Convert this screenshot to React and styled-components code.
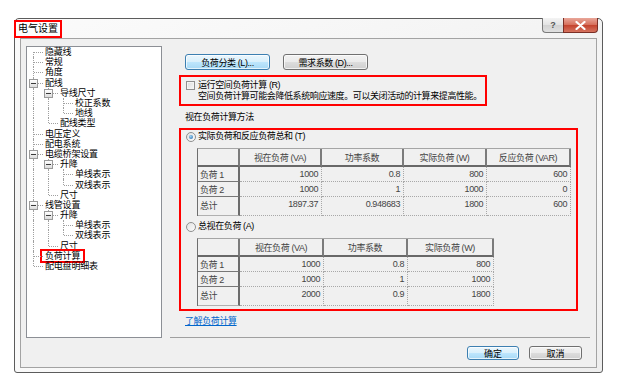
import React from 'react';
import styled, { createGlobalStyle, css } from 'styled-components';

const GlobalStyle = createGlobalStyle`
  * { box-sizing: border-box; }
  body {
    margin: 0;
    background: #ffffff;
    font-family: "Liberation Sans", "Noto Sans CJK SC", sans-serif;
    color: #000;
  }
`;

const treeItems = [
    { label: '隐藏线', guides: [], first: true },
    { label: '常规', guides: [] },
    { label: '角度', guides: [] },
    { label: '配线', guides: [], box: true },
    { label: '导线尺寸', guides: [true], box: true },
    { label: '校正系数', guides: [true, true] },
    { label: '地线', guides: [true, true], last: true },
    { label: '配线类型', guides: [true], last: true },
    { label: '电压定义', guides: [] },
    { label: '配电系统', guides: [] },
    { label: '电缆桥架设置', guides: [], box: true },
    { label: '升降', guides: [true], box: true },
    { label: '单线表示', guides: [true, true] },
    { label: '双线表示', guides: [true, true], last: true },
    { label: '尺寸', guides: [true], last: true },
    { label: '线管设置', guides: [], box: true },
    { label: '升降', guides: [true], box: true },
    { label: '单线表示', guides: [true, true] },
    { label: '双线表示', guides: [true, true], last: true },
    { label: '尺寸', guides: [true], last: true },
    { label: '负荷计算', guides: [], marked: true },
    { label: '配电盘明细表', guides: [], last: true },
];

const totalTable = {
    widths: [42, 82, 82, 83, 84],
    head: ['视在负荷 (VA)', '功率系数', '实际负荷 (W)', '反应负荷 (VAR)'],
    rows: [
        ['负荷 1', '1000', '0.8', '800', '600'],
        ['负荷 2', '1000', '1', '1000', '0'],
        ['总计', '1897.37', '0.948683', '1800', '600'],
    ],
};

const apparentTable = {
    widths: [42, 84, 84, 86],
    head: ['视在负荷 (VA)', '功率系数', '实际负荷 (W)'],
    rows: [
        ['负荷 1', '1000', '0.8', '800'],
        ['负荷 2', '1000', '1', '1000'],
        ['总计', '2000', '0.9', '1800'],
    ],
};

const LoadTable = ({ data }) => {
    const width = data.widths.reduce((a, b) => a + b, 0);
    return (
        <Grid $width={width}>
            <colgroup>
                {data.widths.map((w, i) => (
                    <Col key={i} $w={w} />
                ))}
            </colgroup>
            <thead>
                <tr>
                    <HeadCell />
                    {data.head.map((h) => (
                        <HeadCell key={h}>{h}</HeadCell>
                    ))}
                </tr>
            </thead>
            <tbody>
                {data.rows.map((row, r) => {
                    const tall = r === data.rows.length - 1;
                    return (
                        <tr key={r}>
                            <LabelCell $tall={tall}>{row[0]}</LabelCell>
                            {row.slice(1).map((v, i) => (
                                <ValueCell key={i} $tall={tall}>{v}</ValueCell>
                            ))}
                        </tr>
                    );
                })}
            </tbody>
        </Grid>
    );
};

const TreeRow = ({ item }) => {
    let own = 'full';
    if (item.first) own = 'bottom';
    if (item.last) own = 'top';
    return (
        <Row>
            {item.guides.map((g, i) => (
                <Guide key={i} $v={g ? 'full' : 'none'} />
            ))}
            <Guide $v={own} $stub>
                {item.box && <Expander />}
            </Guide>
            <NodeLabel $marked={item.marked}>{item.label}</NodeLabel>
        </Row>
    );
};

const App = () => {
    return (
        <>
            <GlobalStyle />
            <Window>
                <TitleBar>
                    <Title>电气设置</Title>
                    <Caption>
                        <HelpButton>?</HelpButton>
                        <CloseButton>
                            <svg width="11" height="9" viewBox="0 0 11 9">
                                <path d="M1.5 1 L9.5 8 M9.5 1 L1.5 8" stroke="#fff" strokeWidth="2.2" strokeLinecap="round" />
                            </svg>
                        </CloseButton>
                    </Caption>
                </TitleBar>
                <Client>
                    <Main>
                        <Tree>
                            {treeItems.map((item, i) => (
                                <TreeRow key={i} item={item} />
                            ))}
                        </Tree>
                        <Panel>
                            <ButtonRow>
                                <Button $primary $w={85}>负荷分类 (L)...</Button>
                                <Button $w={85}>需求系数 (D)...</Button>
                            </ButtonRow>
                            <RedBox $w={308}>
                                <OptionLine>
                                    <CheckBox />
                                    <span>运行空间负荷计算 (R)</span>
                                </OptionLine>
                                <Hint>空间负荷计算可能会降低系统响应速度。可以关闭活动的计算来提高性能。</Hint>
                            </RedBox>
                            <SectionLabel>视在负荷计算方法</SectionLabel>
                            <RedBox $w={399} $methods>
                                <RadioLine>
                                    <Radio $checked />
                                    <span>实际负荷和反应负荷总和 (T)</span>
                                </RadioLine>
                                <LoadTable data={totalTable} />
                                <RadioLine $gap={5}>
                                    <Radio />
                                    <span>总视在负荷 (A)</span>
                                </RadioLine>
                                <LoadTable data={apparentTable} />
                            </RedBox>
                            <HelpLink>了解负荷计算</HelpLink>
                        </Panel>
                    </Main>
                    <Footer>
                        <Button $primary $w={52} $h={14}>确定</Button>
                        <Button $w={53} $h={14}>取消</Button>
                    </Footer>
                </Client>
            </Window>
        </>
    );
};

export default App;

const Window = styled.div`
    margin: 18px 0 0 14px;
    width: 589px;
    height: 355px;
    border: 1px solid #5c5c5c;
    border-radius: 5px 5px 3px 3px;
    background: linear-gradient(160deg, #fbfbfb 0%, #f3f3f3 40%, #fafafa 60%, #eeeeee 100%);
    padding: 0 5px 4px 5px;
    display: flex;
    flex-direction: column;
`;

const TitleBar = styled.div`
    height: 19px;
    display: flex;
    justify-content: space-between;
    align-items: flex-start;
`;

const Title = styled.span`
    margin: 1px 0 0 -6px;
    height: 18px;
    width: 48px;
    border: 2px solid #ff0000;
    font-size: 10px;
    line-height: 14px;
    padding-left: 2px;
    color: #000;
    background: #fdfdfd;
    white-space: nowrap;
`;

const Caption = styled.div`
    display: flex;
    margin: -1px -1px 0 0;
`;

const HelpButton = styled.div`
    width: 21px;
    height: 15px;
    border: 1px solid #7b7b7b;
    border-top: none;
    border-right: none;
    border-radius: 0 0 0 4px;
    background: linear-gradient(#f4f4f4, #e2e2e2 50%, #d2d2d2 51%, #e0e0e0);
    color: #555;
    font-size: 9px;
    font-weight: bold;
    line-height: 14px;
    text-align: center;
`;

const CloseButton = styled.div`
    width: 35px;
    height: 15px;
    border: 1px solid #7a2f26;
    border-top: none;
    border-radius: 0 0 4px 0;
    background: linear-gradient(#e9a79a, #d7705c 48%, #c4432e 52%, #d5735f);
    display: flex;
    align-items: center;
    justify-content: center;
`;

const Client = styled.div`
    flex: 1;
    border: 1px solid #a3a3a3;
    background: #f0f0f0;
    padding: 7px 6px 0 5px;
    display: flex;
    flex-direction: column;
`;

const Main = styled.div`
    display: flex;
    height: 292px;
`;

const Tree = styled.div`
    width: 136px;
    height: 292px;
    border: 1px solid #8c8f95;
    background: #ffffff;
    font-size: 9px;
    letter-spacing: -0.2px;
`;

const Row = styled.div`
    display: flex;
    align-items: center;
    height: 10.2px;
    white-space: nowrap;
`;

const Guide = styled.div`
    position: relative;
    width: 15px;
    height: 100%;
    flex: none;

    &::before {
        content: '';
        position: absolute;
        left: 6px;
        border-left: 1px dotted #a0a0a0;
        ${(p) => p.$v === 'none' && css`display: none;`}
        ${(p) => p.$v === 'full' && css`top: 0; bottom: 0;`}
        ${(p) => p.$v === 'top' && css`top: 0; height: 50%;`}
        ${(p) => p.$v === 'bottom' && css`top: 50%; bottom: 0;`}
    }

    ${(p) => p.$stub && css`
        &::after {
            content: '';
            position: absolute;
            left: 7px;
            right: -1px;
            top: 50%;
            border-top: 1px dotted #a0a0a0;
        }
    `}
`;

const Expander = styled.div`
    position: absolute;
    z-index: 1;
    left: 2px;
    top: calc(50% - 4px);
    width: 9px;
    height: 9px;
    border: 1px solid #9a9a9a;
    background: linear-gradient(#ffffff, #dcdcdc);

    &::after {
        content: '';
        position: absolute;
        left: 1px;
        right: 1px;
        top: 3px;
        border-top: 1px solid #3a3a3a;
    }
`;

const NodeLabel = styled.span`
    display: inline-block;
    margin-left: 3px;
    line-height: 10px;
    height: 10px;
    ${(p) => p.$marked && css`
        margin-left: 0;
        padding: 0 3px;
        outline: 2px solid #ff0000;
    `}
`;

const Panel = styled.div`
    flex: 1;
    margin-left: 8px;
    border-bottom: 1px solid #a0a0a0;
    padding: 8px 0 0 9px;
    display: flex;
    flex-direction: column;
    font-size: 9px;
    letter-spacing: -0.4px;
`;

const ButtonRow = styled.div`
    display: flex;
    gap: 13px;
    margin-left: 6px;
`;

const Button = styled.div`
    width: ${(p) => p.$w}px;
    height: ${(p) => p.$h || 16}px;
    border-radius: 3px;
    border: 1px solid ${(p) => (p.$primary ? '#3c7fb1' : '#707070')};
    background: ${(p) =>
        p.$primary
            ? 'linear-gradient(#eaf6fd, #d9f0fc 50%, #bee6fd 51%, #a7d9f5)'
            : 'linear-gradient(#f2f2f2, #ebebeb 50%, #dddddd 51%, #cfcfcf)'};
    box-shadow: inset 0 0 0 1px rgba(255, 255, 255, 0.7);
    font-size: 9px;
    display: flex;
    align-items: center;
    justify-content: center;
    white-space: nowrap;
`;

const RedBox = styled.div`
    width: ${(p) => p.$w}px;
    margin-top: 5px;
    border: 2px solid #ff0000;
    padding: ${(p) => (p.$methods ? '1px 0 3px 5px' : '3px 0 2px 5px')};
    display: flex;
    flex-direction: column;
`;

const OptionLine = styled.div`
    display: flex;
    align-items: center;
    gap: 3px;
    height: 11px;
    line-height: 11px;
    white-space: nowrap;
`;

const CheckBox = styled.span`
    width: 9px;
    height: 9px;
    border: 1px solid #8f8f8f;
    background: linear-gradient(135deg, #dcdcdc, #f8f8f8);
    box-shadow: inset 0 0 0 1px #f4f4f4;
    flex: none;
`;

const Hint = styled.div`
    height: 11px;
    line-height: 11px;
    margin-left: 12px;
    white-space: nowrap;
`;

const SectionLabel = styled.div`
    margin: 6px 0 0 6px;
    height: 11px;
    line-height: 11px;
`;

const RadioLine = styled.div`
    display: flex;
    align-items: center;
    gap: 2px;
    height: 11px;
    line-height: 11px;
    margin-top: ${(p) => p.$gap || 0}px;
    white-space: nowrap;
`;

const Radio = styled.span`
    position: relative;
    width: 10px;
    height: 10px;
    border-radius: 50%;
    border: 1px solid #8e8f8f;
    background: linear-gradient(135deg, #e2e2e2, #fbfbfb);
    flex: none;

    ${(p) => p.$checked && css`
        &::after {
            content: '';
            position: absolute;
            left: 2px;
            top: 2px;
            width: 4px;
            height: 4px;
            border-radius: 50%;
            background: radial-gradient(circle at 40% 35%, #9fd3f5, #1c64a6);
        }
    `}
`;

const Grid = styled.table`
    width: ${(p) => p.$width}px;
    margin: 6px 0 0 11px;
    table-layout: fixed;
    border-collapse: separate;
    border-spacing: 0;
    border-top: 1px solid #a5a5a5;
    border-left: 1px solid #6e6e6e;
    font-size: 9px;
    color: #444444;
`;

const Col = styled.col`
    width: ${(p) => p.$w}px;
`;

const HeadCell = styled.th`
    height: 18px;
    padding: 0;
    font-weight: normal;
    text-align: center;
    vertical-align: middle;
    border-right: 2px solid #7b7b7b;
    border-bottom: 2px solid #686868;
    white-space: nowrap;
    overflow: hidden;
`;

const LabelCell = styled.td`
    height: ${(p) => (p.$tall ? 19 : 15)}px;
    padding: ${(p) => (p.$tall ? '2px 0 0 2px' : '0 0 0 2px')};
    vertical-align: ${(p) => (p.$tall ? 'top' : 'middle')};
    text-align: left;
    border-right: 2px solid #6b6b6b;
    border-bottom: 1px solid ${(p) => (p.$tall ? '#b0b0b0' : '#777777')};
    white-space: nowrap;
`;

const ValueCell = styled.td`
    height: ${(p) => (p.$tall ? 19 : 15)}px;
    padding: ${(p) => (p.$tall ? '2px 3px 0 0' : '0 3px 0 0')};
    vertical-align: ${(p) => (p.$tall ? 'top' : 'middle')};
    text-align: right;
    border-right: 1px dotted #a8a8a8;
    border-bottom: 1px dotted #a8a8a8;
    white-space: nowrap;
`;

const HelpLink = styled.a`
    margin: 5px 0 0 6px;
    height: 11px;
    line-height: 11px;
    color: #0066cc;
    text-decoration: underline;
    cursor: pointer;
    align-self: flex-start;
`;

const Footer = styled.div`
    display: flex;
    justify-content: flex-end;
    gap: 10px;
    padding: 8px 8px 0 0;
`;
